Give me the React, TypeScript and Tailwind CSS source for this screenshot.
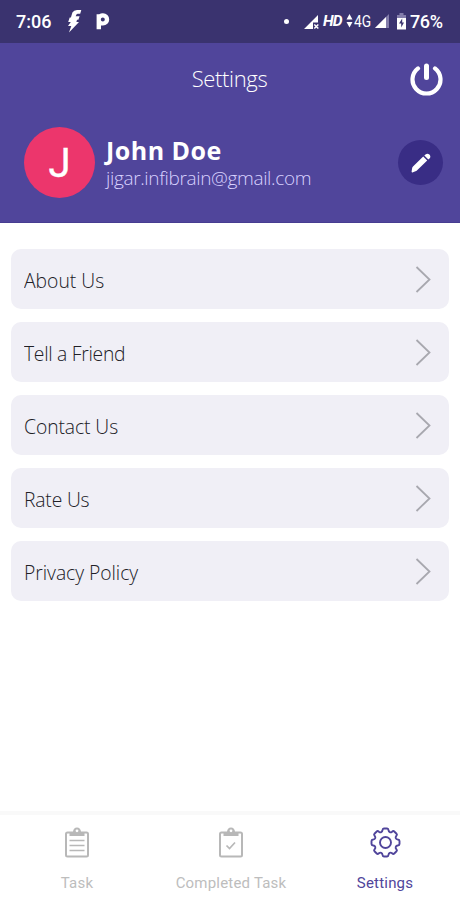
import type { ReactNode } from "react";

const menuItems = [
  { label: "About Us", className: "tracking-normal" },
  { label: "Tell a Friend", className: "tracking-[-0.3px]" },
  { label: "Contact Us", className: "tracking-[-0.1px]" },
  { label: "Rate Us", className: "tracking-[-0.2px]" },
  { label: "Privacy Policy", className: "tracking-[-0.05px]" }
];

// Outline of an eight-tooth gear centred on 0,0
function gearPath() {
  const at = (x: number, y: number, turn: number) => {
    const a = (turn * Math.PI) / 4;
    return `${(x * Math.cos(a) - y * Math.sin(a)).toFixed(2)} ${(x * Math.sin(a) + y * Math.cos(a)).toFixed(2)}`;
  };
  let d = `M${at(-3, -12.3, 0)}`;
  for (let i = 0; i < 8; i++) {
    d += `Q${at(-2.9, -14, i)} ${at(-1.6, -14, i)}L${at(1.6, -14, i)}Q${at(2.9, -14, i)} ${at(3, -12.3, i)}`;
    d += `C${at(3.2, -10.2, i)} ${at(-3.2, -10.2, i + 1)} ${at(-3, -12.3, i + 1)}`;
  }
  return `${d}Z`;
}

function StatusBar() {
  return (
    <div className="flex h-[43px] items-center bg-[#3a336f] pl-4 pr-4 font-[Roboto,sans-serif] text-[18px] font-medium text-white">
      <span className="w-[36px] whitespace-nowrap">7:06</span>
      <svg className="ml-[15px]" width="15" height="24" viewBox="0 0 15 24" fill="white">
        <path d="M5.4 2.6Q6.8 0 10 0H14.3L13.2 3.8H10.6Q9.4 3.8 9 5.4L8.7 6.2H12.6L11.4 9.8H10L9.4 12H12L2 22.5l2.3-6.4H1L3.8 12H1.2L2.7 7.6h1.2Z" />
      </svg>
      <svg className="ml-[14px]" width="14" height="17" viewBox="0 0 14 17" fill="white">
        <path fillRule="evenodd" d="M.6 1.2h2.6A6.2 6.2 0 0 1 7 .2a6.2 6.2 0 0 1 0 12.4H5V16.2H.6ZM6.8 4.4a2 2 0 1 0 0 4 2 2 0 0 0 0-4Z" />
      </svg>
      <span className="ml-auto size-[5px] rounded-full bg-white" />
      <svg className="ml-[15px]" width="16" height="16" viewBox="0 0 16 16" fill="white">
        <path d="M0 15 14 1v7.5H9V15Z" />
        <path d="m10.3 10.5 4 4m0-4-4 4" stroke="white" strokeWidth="1.5" />
      </svg>
      <span className="ml-[3px] w-[20px] text-[15.5px] font-bold italic tracking-[-0.8px]">HD</span>
      <svg className="-mt-0.5 ml-[3px]" width="7" height="14" viewBox="0 0 7 14" fill="white">
        <path d="m3.5 0 3 5.5h-6ZM.5 8h6l-3 5.5Z" />
      </svg>
      <span className="ml-[1px] w-[18px] origin-left scale-x-[0.86] text-[16px] font-normal">4G</span>
      <svg className="ml-[3px]" width="14" height="15" viewBox="0 0 14 15">
        <path d="M0 14 14 0v14Z" fill="#837dab" />
        <path d="M0 14 11 3v11Z" fill="white" />
      </svg>
      <svg className="ml-[8px]" width="9" height="17" viewBox="0 0 9 17">
        <path d="M0 2h2.5V0h4v2H9v3H0Z" fill="#837dab" />
        <path d="M0 5h9v11.5H0Z" fill="white" />
        <path d="M5.2 5.5 2 10.5h2.2v4L7 9.4H5.2Z" fill="#3a336f" />
      </svg>
      <span className="ml-[4px] w-[34px] whitespace-nowrap tracking-[-0.4px]">76%</span>
    </div>
  );
}

function Header() {
  return (
    <header className="h-[180px] border-b border-[#473d91] bg-[#50459b] text-white">
      <div className="grid h-[72px] grid-cols-[1fr_auto_1fr] items-center px-[17px]">
        <h1 className="col-start-2 -mt-0.5 -ml-px text-[22px] font-light tracking-[-0.35px]">Settings</h1>
        <svg className="justify-self-end" width="33" height="33" viewBox="0 0 33 33" fill="none" stroke="white" strokeLinecap="round">
          <path d="M8 5.4a14 14 0 1 0 17 0" strokeWidth="4.2" />
          <path d="M16.5 3v11.5" strokeWidth="5" />
        </svg>
      </div>
      <div className="flex items-center pt-3 pl-6 pr-[17px]">
        <div className="flex size-[71px] items-center justify-center rounded-full bg-[#ec366c] pt-[2px] font-[Roboto,sans-serif] text-[40px] [-webkit-text-stroke:0.4px_white]">J</div>
        <div className="ml-[11px] pt-[3px]">
          <p className="-mt-px text-[25px] font-bold leading-[28px] tracking-[0.5px]">John Doe</p>
          <p className="mt-px text-[19px] font-light leading-[27px] tracking-[-0.35px] text-[#d9d2ff]">jigar.infibrain@gmail.com</p>
        </div>
        <div className="ml-auto flex size-[45px] items-center justify-center rounded-full bg-[#392d85]">
          <svg width="20" height="20" viewBox="0 0 20 20" fill="white">
            <path d="M.6 18.6 1.2 14.8Q1.4 14 2 13.4L12.2 3.6l4 4L5.9 17.5q-.6.6-1.4.8L1.4 19.4q-1 .2-.8-.8Z" />
            <path d="m13.3 2.6 1.2-1.2q2-1.6 3.9.2 1.8 2 .1 3.9l-1.2 1.1Z" />
          </svg>
        </div>
      </div>
    </header>
  );
}

function Clipboard({ children }: { children: ReactNode }) {
  return (
    <svg width="24" height="31" viewBox="0 0 24 31" fill="none" stroke="#b8b8b8">
      <rect x="1" y="5.5" width="22" height="24" rx="1.5" strokeWidth="2" />
      <path d="M4.5 9V5H8q.3-4.5 4-4.5t4 4.5h3.5v4Z" fill="#b8b8b8" stroke="none" />
      <circle cx="12" cy="3.8" r="1.4" fill="white" stroke="none" />
      {children}
    </svg>
  );
}

function NavItem({ label, icon, active }: { label: string; icon: ReactNode; active?: boolean }) {
  return (
    <div className={`flex w-[154px] shrink-0 flex-col items-center ${active ? "text-[#50459b]" : "text-[#bdbdbd]"}`}>
      <div className="flex h-[31px] items-center">{icon}</div>
      <span className="mt-[15px] whitespace-nowrap text-[15px] leading-5 tracking-[0.2px]">{label}</span>
    </div>
  );
}

export default function App() {
  return (
    <div className="flex h-[900px] w-[460px] flex-col overflow-hidden bg-white font-['Open_Sans',sans-serif]">
      <StatusBar />
      <Header />
      <main className="flex grow flex-col gap-[13px] px-[11px] pt-[26px]">
        {menuItems.map((item) => (
          <div key={item.label} className="flex h-[60px] items-center justify-between rounded-[10px] bg-[#f0eff6] pl-[13px] pr-[18px]">
            <span className={`origin-left scale-x-[0.92] pt-1 text-[21px] font-light text-[#202026] ${item.className}`}>{item.label}</span>
            <svg width="16" height="27" viewBox="0 0 16 27" fill="none" stroke="#a8a8af" strokeWidth="1.8">
              <path d="m1.5 1 13 12.5-13 12.5" />
            </svg>
          </div>
        ))}
      </main>
      <nav className="flex h-[89px] border-t-4 border-[#f9f9f9] pt-[12px] font-[Roboto,sans-serif]">
        <NavItem
          label="Task"
          icon={
            <Clipboard>
              <path d="M4.5 13.5h15m-15 5h15m-15 5h15" strokeWidth="1.3" />
            </Clipboard>
          }
        />
        <NavItem
          label="Completed Task"
          icon={
            <Clipboard>
              <path d="m7.5 18.5 3 3 5.5-6" strokeWidth="1.7" />
            </Clipboard>
          }
        />
        <NavItem
          label="Settings"
          active
          icon={
            <svg width="31" height="31" viewBox="-15.5 -15.5 31 31" fill="none" stroke="currentColor" strokeWidth="1.9">
              <path d={gearPath()} />
              <circle r="5.5" />
            </svg>
          }
        />
      </nav>
    </div>
  );
}
